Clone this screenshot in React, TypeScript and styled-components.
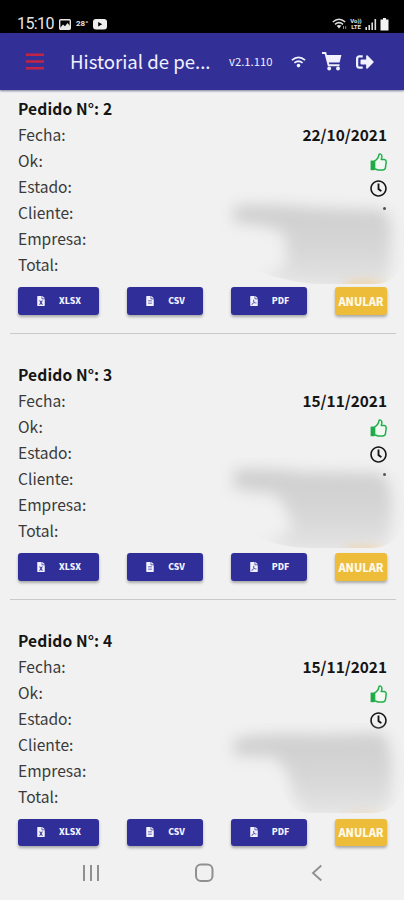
import React from "react";
import styled, { createGlobalStyle } from "styled-components";
import { FaRegClock, FaSignOutAlt, FaFileAlt, FaFilePdf, FaFileExcel } from "react-icons/fa";

const GlobalStyle = createGlobalStyle`
  * { box-sizing: border-box; }
  html, body { margin: 0; padding: 0; background: #f1f1f1; }
  body { overflow: hidden; font-family: "Noto Sans CJK SC", "Noto Sans", sans-serif; color: #222; }
`;

const Screen = styled.div`
  width: 404px;
  height: 900px;
  display: flex;
  flex-direction: column;
  background: #f1f1f1;
  overflow: hidden;
`;

const StatusBar = styled.div`
  height: 33px;
  flex: none;
  background: #000;
  color: #e6e6e6;
  display: flex;
  align-items: flex-end;
  justify-content: space-between;
  padding: 0 15px 0 17px;
`;

const StatusGroup = styled.div<{ $gap: number }>`
  display: flex;
  align-items: center;
  height: 18px;
  gap: ${(p) => p.$gap}px;
`;

const StatusTime = styled.span`
  font: 400 16px/18px Roboto, sans-serif;
  width: 37px;
  letter-spacing: -0.6px;
`;

const Temperature = styled.span`
  font: 700 8px/18px Roboto, sans-serif;
  width: 12px;
`;

const Volte = styled.span`
  font: 700 6px/6px Roboto, sans-serif;
  width: 12px;
  text-align: center;
`;

const Header = styled.header`
  height: 57px;
  flex: none;
  background: #323097;
  color: #f1f1ff;
  display: flex;
  align-items: center;
  padding: 0 29px 0 26px;
  box-shadow: 0 1px 2px rgba(30, 30, 90, 0.55);
  position: relative;
`;

const Burger = styled.span`
  display: flex;
  width: 18px;
  margin-right: 26px;
`;

const Title = styled.h1`
  margin: 0;
  width: 159px;
  padding-bottom: 1px;
  font-size: 18.6px;
  line-height: 28px;
  font-weight: 400;
  white-space: nowrap;
`;

const Version = styled.span`
  width: 62px;
  padding-bottom: 1px;
  font-size: 11.3px;
  line-height: 16px;
`;

const HeaderIcon = styled.span<{ $gap: number }>`
  display: flex;
  margin-right: ${(p) => p.$gap}px;
`;

const Orders = styled.main`
  padding: 5px 8px 0 10px;
  display: flex;
  flex-direction: column;
  gap: 27px;
  height: 756px;
  flex: none;
`;

const OrderCard = styled.section<{ $last?: boolean }>`
  position: relative;
  height: 239px;
  flex: none;
  padding: 0 9px 0 8px;
  border-bottom: 1px solid ${(p) => (p.$last ? "transparent" : "#c9c9c9")};
`;

const Row = styled.div`
  display: flex;
  justify-content: space-between;
  align-items: center;
  height: 26px;
  font-size: 16px;
  line-height: 26px;
`;

const RowIcon = styled.span`
  display: flex;
  padding-top: 4px;
`;

const Label = styled.span`
  color: #3a3a3a;
  font-size: 15.6px;
`;

const Strong = styled.strong<{ $tight?: boolean }>`
  font-size: ${(p) => (p.$tight ? 15.4 : 15.6)}px;
  font-weight: 700;
  color: #151515;
  letter-spacing: ${(p) => (p.$tight ? 0 : 0.1)}px;
`;

const Mark = styled.i`
  width: 3px;
  height: 3px;
  border-radius: 50%;
  background: #222;
  align-self: flex-start;
  margin: 8px 1px 0 0;
`;

const Actions = styled.div<{ $short?: boolean }>`
  display: grid;
  grid-template-columns: 81px 76px 76px 52px;
  justify-content: space-between;
  height: ${(p) => (p.$short ? 27 : 28)}px;
  margin-top: 10px;
`;

const Button = styled.button<{ $warn?: boolean }>`
  border: 0;
  padding: 0 0 1px;
  border-radius: 3px;
  display: flex;
  align-items: center;
  justify-content: center;
  gap: 13px;
  font-family: inherit;
  font-weight: 900;
  font-size: ${(p) => (p.$warn ? 10.9 : 8.7)}px;
  line-height: 16px;
  color: ${(p) => (p.$warn ? "#fff9e9" : "#f2f2ff")};
  background: ${(p) => (p.$warn ? "#edbd39" : "#302e99")};
  box-shadow: 0 2px 3px rgba(0, 0, 0, 0.3);
`;

const Redaction = styled.svg`
  position: absolute;
  left: 200px;
  top: 96px;
  width: 194px;
  height: 100px;
`;

const NavBar = styled.nav`
  height: 54px;
  flex: none;
  display: flex;
  align-items: center;
  justify-content: space-between;
  padding: 0 81px 0 82px;
  background: #f1f1f1;
`;

const ThumbIcon = () => (
  <svg width="17" height="18" viewBox="0 0 17 18">
    <path d="M0.6 7.6H4.6V17.2H0.6Z" fill="#20a844" />
    <path
      d="M4.6 8 C7 6.6 8.6 4.8 9 1.6 Q9.3 .8 10.2 .9 Q12.3 1.6 11.8 4.2 L11.3 6.4 H14.4 Q16.3 6.7 16.2 9 L15.4 15 Q15 16.8 13 17 H8 L4.6 15.8 Z"
      fill="#f1f9f2"
      stroke="#20b04a"
      strokeWidth="1.5"
      strokeLinejoin="round"
    />
  </svg>
);

const WifiIcon = () => (
  <svg width="15" height="12" viewBox="0 0 15 12">
    <path d="M.9 4.2Q7.5 -1.6 14.1 4.2M3.4 6.9Q7.5 3.6 11.6 6.9" fill="none" stroke="currentColor" strokeWidth="1.7" />
    <circle cx="7.5" cy="9.6" r="1.8" fill="currentColor" />
  </svg>
);

const CartIcon = () => (
  <svg width="20" height="19" viewBox="0 0 20 19">
    <path d="M0 1H3.4L6.6 13.3H17.5" fill="none" stroke="currentColor" strokeWidth="1.9" />
    <path d="M4.2 3H19.4L17.6 10.6H6.2Z" fill="currentColor" />
    <circle cx="7.2" cy="16.5" r="1.9" fill="currentColor" />
    <circle cx="16" cy="16.5" r="1.9" fill="currentColor" />
  </svg>
);

interface Order {
  id: number;
  date: string;
  mark: boolean;
  blob: string;
  edge: string;
  tint: number;
}

const orders: Order[] = [
  {
    id: 2,
    date: "22/10/2021",
    mark: true,
    blob: "M24 15 Q60 12 105 17 L172 19 Q183 26 181 50 L180 84 Q160 105 105 98 L50 88 L76 76 L76 46 Q68 34 24 32Z",
    edge: "M0 0H194V62Q190 93 165 93H105Q75 91 35 76L0 70Z",
    tint: 0.6,
  },
  {
    id: 3,
    date: "15/11/2021",
    mark: true,
    blob: "M24 13 Q55 10 90 15 L168 16 Q182 22 182 50 L180 82 Q150 103 92 97 L56 86 L82 74 Q80 48 63 37 L24 32Z",
    edge: "M0 0H194V60Q190 91 160 91H100Q65 90 42 78L0 70Z",
    tint: 0.6,
  },
  {
    id: 4,
    date: "15/11/2021",
    mark: false,
    blob: "M24 16 Q60 9 110 12 L172 10 Q182 20 182 50 L180 82 Q150 100 95 93 L82 70 Q80 40 60 34 L24 33Z",
    edge: "M0 0H194V60Q190 90 160 90H100Q80 89 76 76L70 62H0Z",
    tint: 0.4,
  },
];

const BlurPatch = ({ order }: { order: Order }) => (
  <Redaction viewBox="0 0 194 100" aria-hidden>
    <defs>
      <filter id={`soft${order.id}`} x="-20%" y="-30%" width="140%" height="160%" colorInterpolationFilters="sRGB">
        <feGaussianBlur stdDeviation="7" />
      </filter>
      <filter id={`glow${order.id}`} x="-50%" y="-200%" width="200%" height="500%" colorInterpolationFilters="sRGB">
        <feGaussianBlur stdDeviation="4" />
      </filter>
      <linearGradient id={`shade${order.id}`} x1="0" y1="0" x2="0" y2="1">
        <stop offset="0" stopColor="#cecece" />
        <stop offset="0.5" stopColor="#d6d6d6" />
        <stop offset="0.8" stopColor="#dfdfdf" />
        <stop offset="1" stopColor="#e6e6e6" />
      </linearGradient>
      <clipPath id={`edge${order.id}`}>
        <path d={order.edge} />
      </clipPath>
    </defs>
    <g clipPath={`url(#edge${order.id})`}>
      <path d={order.blob} fill={`url(#shade${order.id})`} filter={`url(#soft${order.id})`} />
      <ellipse
        cx="155"
        cy="94"
        rx="22"
        ry="5"
        fill="#f3c98a"
        opacity={order.tint}
        filter={`url(#glow${order.id})`}
      />
    </g>
  </Redaction>
);

const OrderItem = ({ order, last }: { order: Order; last: boolean }) => (
  <OrderCard $last={last}>
    <BlurPatch order={order} />
    <Row>
      <Strong>Pedido N°: {order.id}</Strong>
    </Row>
    <Row>
      <Label>Fecha:</Label>
      <Strong $tight>{order.date}</Strong>
    </Row>
    <Row>
      <Label>Ok:</Label>
      <RowIcon>
        <ThumbIcon />
      </RowIcon>
    </Row>
    <Row>
      <Label>Estado:</Label>
      <RowIcon>
        <FaRegClock size={17} color="#161616" />
      </RowIcon>
    </Row>
    <Row>
      <Label>Cliente:</Label>
      {order.mark && <Mark />}
    </Row>
    <Row>
      <Label>Empresa:</Label>
    </Row>
    <Row>
      <Label>Total:</Label>
    </Row>
    <Actions $short={last}>
      <Button>
        <FaFileExcel size={10} />
        XLSX
      </Button>
      <Button>
        <FaFileAlt size={10} />
        CSV
      </Button>
      <Button>
        <FaFilePdf size={10} />
        PDF
      </Button>
      <Button $warn>ANULAR</Button>
    </Actions>
  </OrderCard>
);

export default function App() {
  return (
    <Screen>
      <GlobalStyle />
      <StatusBar>
        <StatusGroup $gap={5}>
          <StatusTime>15:10</StatusTime>
          <svg width="12" height="11" viewBox="0 0 12 11">
            <rect x="0.7" y="0.7" width="10.6" height="9.6" rx="1" fill="none" stroke="#e6e6e6" strokeWidth="1.4" />
            <path d="M1 9 4 5.5 6 7.2 8.5 4 11 7V10H1Z" fill="#e6e6e6" />
          </svg>
          <Temperature>28°</Temperature>
          <svg width="14" height="11" viewBox="0 0 14 11">
            <rect width="14" height="10.5" rx="3" fill="#eee" />
            <path d="M5.2 3v4.6L9.2 5.3Z" fill="#000" />
          </svg>
        </StatusGroup>
        <StatusGroup $gap={3}>
          <svg width="15" height="12" viewBox="0 0 15 12">
            <path d="M.8 4Q7 -1.5 13.2 4M3 6.3Q7 3 11 6.3" fill="none" stroke="#ddd" strokeWidth="1.5" />
            <path d="M4.6 7.8Q7 6 9.4 7.8L7 10.5Z" fill="#ddd" />
            <path d="M11.5 8v3M13.7 8v3" stroke="#888" />
          </svg>
          <Volte>
            Vo))
            <br />
            LTE
          </Volte>
          <svg width="12" height="12" viewBox="0 0 12 12">
            <path d="M1.2 9v3M4.2 7v5M7.2 4.5V12M10.3 1V12" stroke="#ddd" strokeWidth="1.6" />
          </svg>
          <svg width="9" height="13" viewBox="0 0 9 13">
            <path d="M3 0H6V1.6H8.5V12.5H.5V1.6H3Z" fill="#f3f3f3" />
          </svg>
        </StatusGroup>
      </StatusBar>
      <Header>
        <Burger>
          <svg width="18" height="17" viewBox="0 0 18 17">
            <path d="M0 1.8H18M0 8.5H18M0 15.2H18" stroke="#c32443" strokeWidth="2.6" />
          </svg>
        </Burger>
        <Title>Historial de pe...</Title>
        <Version>v2.1.110</Version>
        <HeaderIcon $gap={16}>
          <WifiIcon />
        </HeaderIcon>
        <HeaderIcon $gap={14}>
          <CartIcon />
        </HeaderIcon>
        <HeaderIcon $gap={0}>
          <FaSignOutAlt size={18} />
        </HeaderIcon>
      </Header>
      <Orders>
        {orders.map((order, i) => (
          <OrderItem key={order.id} order={order} last={i === orders.length - 1} />
        ))}
      </Orders>
      <NavBar>
        <svg width="18" height="18" viewBox="0 0 18 18">
          <path d="M2 1V17M9 1V17M16 1V17" stroke="#909090" strokeWidth="2" />
        </svg>
        <svg width="22" height="20" viewBox="0 0 22 20">
          <rect x="1" y="1.5" width="16.5" height="16.5" rx="5" fill="none" stroke="#909090" strokeWidth="2" />
        </svg>
        <svg width="12" height="18" viewBox="0 0 12 18">
          <path d="M10.3 1.5 2 9 10.3 16.5" fill="none" stroke="#909090" strokeWidth="1.9" />
        </svg>
      </NavBar>
    </Screen>
  );
}
